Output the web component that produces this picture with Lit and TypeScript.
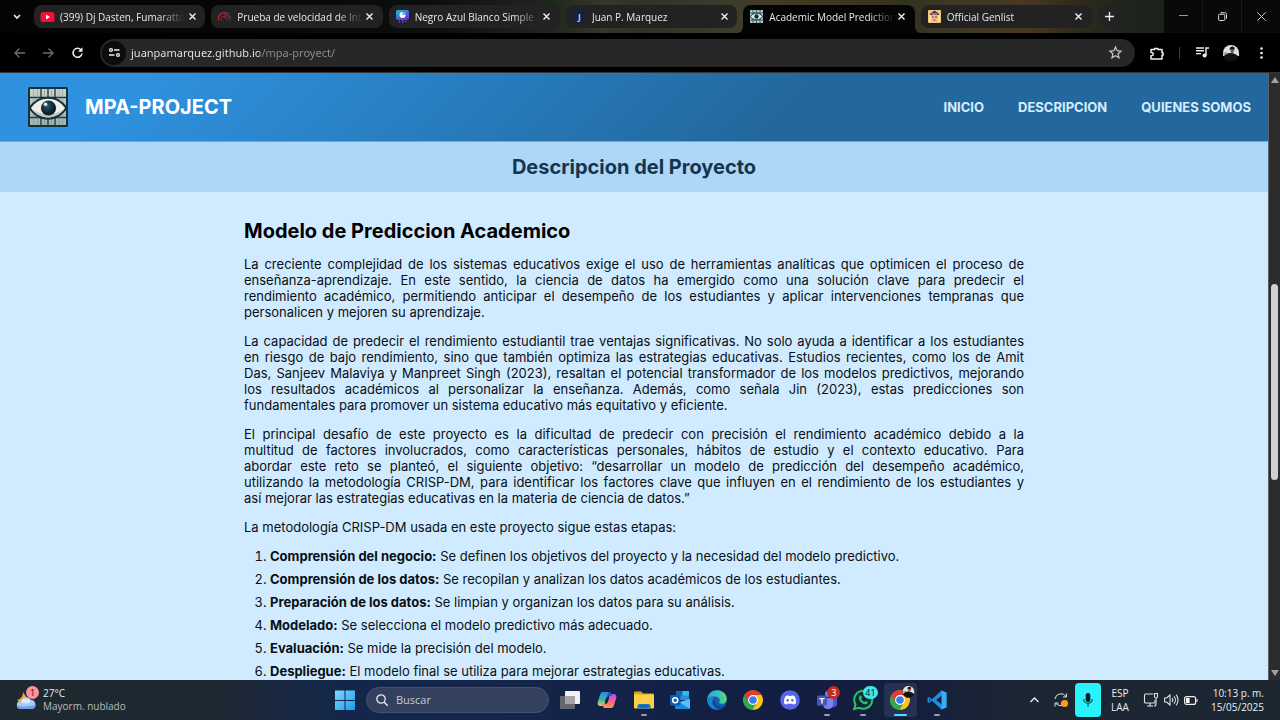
import { LitElement, html, svg, css, TemplateResult } from "lit";
import { customElement } from "lit/decorators.js";
import { classMap } from "lit/directives/class-map.js";

const avatar = svg`
  <circle cx="9" cy="9" r="8.5" fill="#0b0b0b"/>
  <path d="M1 9a8 8 0 0 1 16 0v3H1z" fill="#dfe3e2"/>
  <path d="M0.8 9l4-1 2 2-5 1z" fill="#9aa19c"/>
  <path d="M8.3 3.6h3.6l.4 2-.6 2.6-1.4 1.2-1.6-1z" fill="#8b5b49"/>
  <path d="M7.6 5c0-3 5-3.4 5.1-.4l-.6.8-3.6-.2-.5 1.4z" fill="#1a1413"/>
  <path d="M1.500 13c1.500-2.500 4-3.800 7-4 3 0 6 1.500 8 3.500a8.500 8.500 0 0 1-15 .5z" fill="#111"/>`;

const chromeLogo = svg`
  <circle cx="10" cy="10" r="9.800" fill="#fbc116"/>
  <path d="M1.510 5.100A9.800 9.800 0 0 0 10 19.800L14 12.300 10 10z" fill="#2da94f"/>
  <path d="M18.490 5.100H10v5l4 2.200L10 19.800A9.800 9.800 0 0 0 18.490 5.100z" fill="#fcc31e"/>
  <path d="M1.510 5.100A9.800 9.800 0 0 1 18.490 5.100H10L5.800 12.400z" fill="#e33b2e"/>
  <circle cx="10" cy="10" r="4.900" fill="#fff"/>
  <circle cx="10" cy="10" r="3.800" fill="#3b7ded"/>`;

const eyeLogo = svg`
  <defs>
    <linearGradient id="tile" x1="0" y1="0" x2="0" y2="1"><stop offset="0" stop-color="#cdd2c9"/><stop offset="1" stop-color="#9fb3af"/></linearGradient>
    <radialGradient id="iris" cx=".4" cy=".35"><stop offset="0" stop-color="#3a5a65"/><stop offset=".5" stop-color="#1b3d49"/><stop offset="1" stop-color="#0a222c"/></radialGradient>
  </defs>
  <rect width="40" height="40" rx="1.500" fill="#12323c"/>
  <rect x="2" y="2" width="36" height="36" fill="url(#tile)"/>
  <path d="M13 2v36M20 2v36M27 2v36M2 10.500h36M2 30.500h36" stroke="#17353d" stroke-width="1.300"/>
  <path d="M5.500 2v36M9.500 2v36M16.500 2v36M23.500 2v36M31 2v36M34.500 2v36" stroke="#7b918d" stroke-width=".5"/>
  <path d="M.5 21C10 6 30 6 39.500 21 30 36.500 10 36.500 .5 21z" fill="#12323c"/>
  <path d="M3 21C11 8.500 29 8.500 37 21 29 33.500 11 33.500 3 21z" fill="#f1efe6"/>
  <path d="M3 21C11 33.500 29 33.500 37 21 29 29 11 29 3 21z" fill="#b9c8c4"/>
  <circle cx="20.500" cy="21" r="7.600" fill="url(#iris)"/>
  <circle cx="17.500" cy="17.300" r="1.800" fill="#e9f0ee"/>`;

interface Tab { title: string; icon: TemplateResult; active?: boolean; }

const tabs: Tab[] = [
  { title: "(399) Dj Dasten, Fumaratto", icon: svg`<rect x="-.5" y="2" width="14" height="10" rx="2.500" fill="#f40f37"/><path d="M5 4.500v5L9 7z" fill="#fff"/>` },
  { title: "Prueba de velocidad de Int", icon: svg`<g fill="none" stroke="#b8202c"><path d="M.7 10.500A6 6 0 0 1 10.500 4.300" stroke-width="1.300"/><path d="M3 10.500A4 4 0 0 1 8 6" stroke-width="1"/><path d="M6 3.300l6.800 6.900M8 3l5 5M5.500 6l4.500 4.500" stroke-width="1"/></g>` },
  { title: "Negro Azul Blanco Simple", icon: svg`<defs><linearGradient id="cv" x1="0" y1="0" x2=".6" y2="1"><stop stop-color="#20bfd6"/><stop offset="1" stop-color="#6a2fe0"/></linearGradient></defs><rect width="13" height="10" rx="2" fill="url(#cv)"/><path d="M3.500 9.500l-1 3.500 2-1zM6 10h1.500v3H6zM9.500 9.500l1.500 3.500-2-1z" fill="#6a35e6"/><circle cx="6.500" cy="5" r="3" fill="#fff"/><path d="M6.500 5V2a3 3 0 0 1 3 3z" fill="#4fb4ea"/>` },
  { title: "Juan P. Marquez", icon: svg`<rect width="13" height="13" rx="1" fill="#17213a"/><text x="6.500" y="10" text-anchor="middle" font-family="Noto Sans" font-size="9" font-weight="600" fill="#cfdcec">J</text>` },
  { title: "Academic Model Prediction", active: true, icon: svg`<rect width="13" height="13" fill="#a9c6c4"/><path d="M0 3h13M0 10h13M3 0v13M6.500 0v13M10 0v13" stroke="#2d4c55" stroke-width=".8"/><path d="M.5 6.500C3 2 10 2 12.500 6.500 10 11 3 11 .5 6.500z" fill="#e6eeea" stroke="#12323c"/><circle cx="6.500" cy="6.500" r="2.200" fill="#12323c"/>` },
  { title: "Official Genlist", icon: svg`<rect width="13" height="13" rx="1" fill="#f0c470"/><path d="M2 4L6.500.5 11 4v3H2z" fill="#2c3c73"/><path d="M1 5h2v7H1zM10 5h2v7h-2z" fill="#fbe58b"/><ellipse cx="6.500" cy="7.500" rx="3.600" ry="4.500" fill="#f2b9a0"/><path d="M3 5l3.500-2L10 5 6.500 4.500z" fill="#b8352e"/><path d="M4.300 7h1.500M7.300 7h1.500" stroke="#23233d"/><path d="M5.500 10h2" stroke="#b02a2a"/>` },
];

const steps: [string, string][] = [
  ["Comprensión del negocio:", "Se definen los objetivos del proyecto y la necesidad del modelo predictivo."],
  ["Comprensión de los datos:", "Se recopilan y analizan los datos académicos de los estudiantes."],
  ["Preparación de los datos:", "Se limpian y organizan los datos para su análisis."],
  ["Modelado:", "Se selecciona el modelo predictivo más adecuado."],
  ["Evaluación:", "Se mide la precisión del modelo."],
  ["Despliegue:", "El modelo final se utiliza para mejorar estrategias educativas."],
];

interface App { name: string; icon: TemplateResult; open?: boolean; active?: boolean; badge?: string; tone?: string; }

const apps: App[] = [
  { name: "Vista de tareas", icon: svg`<rect x="0" y="6" width="15" height="13" rx="1" fill="#65686b"/><rect x="5" y="1" width="15" height="13" rx="1" fill="#f2f2f2"/><path d="M5 6h10v8H5z" fill="#a3a4a5"/>` },
  { name: "Copilot", icon: svg`<defs><linearGradient id="cpa" x1="0" y1="0" x2="0" y2="1"><stop stop-color="#2a8be8"/><stop offset=".55" stop-color="#35b8a2"/><stop offset="1" stop-color="#efd13a"/></linearGradient><linearGradient id="cpb" x1="0" y1="0" x2="0" y2="1"><stop stop-color="#a65be0"/><stop offset=".5" stop-color="#f0609a"/><stop offset="1" stop-color="#fb9a48"/></linearGradient></defs><path d="M6 2h6c2 0 2 1.500 3 4h-3c-2 0-2.500 1-3 3l-1 4c-.5 2-1 3-3 3H4c-3 0-4-2-3-5l2-6c.6-2 1.300-3 3-3z" fill="url(#cpa)"/><path d="M14 18H8c-2 0-2-1.500-3-4h3c2 0 2.500-1 3-3l1-4c.5-2 1-3 3-3h1c3 0 4 2 3 5l-2 6c-.6 2-1.300 3-3 3z" fill="url(#cpb)"/><path d="M11 2h1c2 0 2 1.500 3 4h-3c-1 0-1.500.3-2 1z" fill="#1d55c9"/><path d="M9 8h3l-1.500 4.500H7.500z" fill="#14274a"/>` },
  { name: "Explorador de archivos", open: true, icon: svg`<path d="M0 3c0-1 .5-1.500 1.500-1.500H7l2 2h9.500c1 0 1.500.5 1.500 1.500v5H0z" fill="#e2a31c"/><rect y="4.500" width="20" height="14" rx="1.300" fill="#fbd047"/><path d="M3.500 18.500V16c0-1.300.8-2 2-2h9c1.200 0 2 .7 2 2v2.500z" fill="#1679c5"/><path d="M6 15.500h8v1H6z" fill="#0c5797"/>` },
  { name: "Outlook", icon: svg`<path d="M6 1h13v9H6z" fill="#2b8fd8"/><path d="M6 1h6.500v4.500H6z" fill="#1066b5"/><path d="M12.500 1H19v4.500h-6.500z" fill="#35b8f1"/><path d="M5 9l7.500 4.500L20 9v9c0 .6-.4 1-1 1H6c-.6 0-1-.4-1-1z" fill="#1a8ad8"/><path d="M20 9v10L9 12z" fill="#4fc3f5"/><rect y="5" width="10.500" height="10.500" rx="1" fill="#0c5eb0"/><circle cx="5.200" cy="10.200" r="2.500" fill="none" stroke="#fff" stroke-width="1.500"/>` },
  { name: "Edge", icon: svg`<defs><linearGradient id="eg" x1="0" y1=".4" x2="1" y2=".3"><stop stop-color="#26a8e2"/><stop offset=".6" stop-color="#36c5b5"/><stop offset="1" stop-color="#6bdc5c"/></linearGradient></defs><circle cx="10" cy="10" r="9.800" fill="#1261ad"/><path d="M.3 9C1 3.500 5 .2 10 .2c5.700 0 9.800 4 9.800 8.500 0 3-2.300 5-5 5-2 0-3-.7-2.500-1.700C14 9 11 6.500 8 6.500 4 6.500 1 8 .3 11z" fill="url(#eg)"/><path d="M.3 9C2 6.500 5 5.700 7.500 6.500 4.500 8.500 4 14.500 8 17.500c2 1.500 4 2 5 1.900C6 21-.3 16 .3 9z" fill="#1d83d4"/><path d="M8.500 8.500C6.500 11 8.500 16 13 16.500c2.500.2 4.500-.8 5.500-1.500-.8 2-3 4-5.500 4.400-4-.3-7.500-4-7-7.900.3-1.600 1.300-2.700 2.500-3z" fill="#114a8b"/>` },
  { name: "Google Chrome", icon: chromeLogo },
  { name: "Discord", icon: svg`<circle cx="10" cy="10" r="9.800" fill="#5865ea"/><path d="M5.500 6.200C7 5.300 8 5.200 8.300 5.200l.4.800h2.600l.4-.8c.3 0 1.300.1 2.800 1 1.200 2 1.700 4.500 1.500 7-1 .8-2 1.300-3 1.400l-.7-1.200c-1.500.4-3.100.4-4.600 0L7 14.600c-1-.1-2-.6-3-1.400-.2-2.500.3-5 1.500-7z" fill="#fff"/><ellipse cx="7.700" cy="10.300" rx="1.200" ry="1.400" fill="#5865ea"/><ellipse cx="12.300" cy="10.300" rx="1.200" ry="1.400" fill="#5865ea"/>` },
  { name: "Teams", open: true, badge: "3", tone: "red", icon: svg`<circle cx="17" cy="6" r="2" fill="#5e67c9"/><circle cx="11" cy="4" r="3" fill="#7b83eb"/><path d="M14 8h6v6a3.500 3.500 0 0 1-5 3z" fill="#5059c9"/><path d="M6 8h10v6c0 3-2 5-5 5s-5-2-5-5z" fill="#7b83eb"/><rect y="5.500" width="10" height="10" rx="1" fill="#4b53bc"/><path d="M2.500 8h5v1.300H5.700V13.500H4.300V9.300H2.500z" fill="#fff"/>` },
  { name: "WhatsApp", open: true, badge: "41", tone: "cyan", icon: svg`<path d="M1.200 19l1.300-4.600A9 9 0 1 1 6 17.700z" fill="#102a38" stroke="#27c463" stroke-width="2"/><path d="M6.500 6c.8-1 1.500-.8 1.800-.1l.7 1.600c.1.500-.8 1.300-.8 1.500.7 1.400 1.900 2.300 3.200 2.900.4.100 1-1 1.400-1l1.800.9c.6.400 0 1.700-.8 2.200-1.500.9-4 .1-6-2C5.700 10 5.500 7.500 6.500 6z" fill="#27c463"/>` },
  { name: "Chrome: juanpamarquez", open: true, active: true, icon: chromeLogo },
  { name: "Visual Studio Code", open: true, icon: svg`<path d="M14.500.5L5 9.300 2 7 .5 7.800v4.400L2 13l3-2.300 9.500 8.800 5-2.300V2.800z" fill="#1f8fdc"/><path d="M14.500.5l5 2.300v14.400l-5 2.300z" fill="#39adf2"/><path d="M14.500 5.800L9 10l5.500 4.200zM2 8.500L3.500 10 2 11.500z" fill="#10234a"/>` },
];

@customElement("browser-chrome")
class BrowserChrome extends LitElement {
  static styles = css`
    :host { display: block; background: #000; font: 10px/16px "Open Sans", "Noto Sans", sans-serif; color: #e8e8e8; }
    button { font: inherit; color: inherit; background: none; border: 0; padding: 0; display: flex; align-items: center; justify-content: center; flex: none; }
    svg { display: block; overflow: visible; flex: none; }
    .strip { display: flex; height: 33px; background: linear-gradient(90deg, #040404, #070707 20%, #0b0f0c 34%, #20271f 43%, #34372a 47%, #2f3227 50%, #3d3c2b 57%, #40391f 63%, #33311f 71%, #3c3826 74%, #493822 80%, #302b1b 84%, #20261f 87%, #1c211b 91%); }
    .search { width: 34px; }
    .tabs { display: flex; flex: 0 1 1058px; gap: 6px; padding-top: 5px; min-width: 0; }
    .tab { position: relative; flex: 1 1 0; min-width: 0; display: flex; align-items: center; gap: 6px; height: 23px; padding: 0 6px 0 7px; box-sizing: border-box; border-radius: 8px; background: #222222; }
    .tab.active { background: #030403; height: 28px; padding-bottom: 5px; border-radius: 8px 8px 0 0; }
    .tab.active::before, .tab.active::after { content: ""; position: absolute; bottom: 0; width: 6px; height: 6px; }
    .tab.active::before { right: 100%; background: radial-gradient(circle at 0 0, transparent 6px, #030403 6px); }
    .tab.active::after { left: 100%; background: radial-gradient(circle at 100% 0, transparent 6px, #030403 6px); }
    .title { flex: 1; min-width: 0; overflow: hidden; white-space: nowrap; margin-right: -6px; padding-right: 1px; -webkit-mask-image: linear-gradient(90deg, #000 calc(100% - 26px), transparent); mask-image: linear-gradient(90deg, #000 calc(100% - 26px), transparent); }
    .close { width: 14px; height: 14px; }
    .plus { width: 22px; height: 22px; margin: 5px 0 0 6px; border-radius: 50%; background: #222; }
    .fill { flex: 1; }
    .controls { display: flex; gap: 1px; background: #171817; }
    .control { width: 38px; background: #090909; }
    .bar { display: flex; align-items: center; height: 40px; box-sizing: border-box; padding: 0 9px; border-bottom: 1px solid #353535; }
    .nav { width: 20px; height: 20px; margin-right: 9px; color: #6d6d6d; }
    .nav.on { color: #ededed; margin-right: 13px; }
    .omni { flex: 1; min-width: 0; display: flex; align-items: center; height: 28px; border-radius: 14px; background: #272727; padding: 0 13px 0 2px; }
    .site { width: 24px; height: 24px; border-radius: 50%; background: #0c0c0c; }
    .address { flex: 1; display: grid; min-width: 0; }
    .tools { display: flex; align-items: center; }
    .tool { width: 20px; height: 20px; }
    .puzzle { margin-left: 12px; }
    .sep { width: 1px; height: 12px; margin: 0 12px; background: #3c3c3c; }
    .person { margin: 0 11px 0 10px; }
  `;

  render() {
    return html`
      <div class="strip">
        <button class="search" aria-label="Buscar pestañas"><svg width="8" height="6" viewBox="0 0 8 6"><path d="M1 1l3 3 3-3" fill="none" stroke="#eee" stroke-width="1.600"/></svg></button>
        <div class="tabs">
          ${tabs.map((t) => html`
            <div class=${classMap({ tab: true, active: !!t.active })}>
              <svg width="13" height="13" viewBox="0 0 13 13">${t.icon}</svg>
              <span class="title">${t.title}</span>
              <button class="close" aria-label="Cerrar pestaña"><svg width="7" height="7" viewBox="0 0 7 7"><path d="M.5.5l6 6M6.500.5l-6 6" stroke="#f2f2f2" stroke-width="1.400"/></svg></button>
            </div>`)}
        </div>
        <button class="plus" aria-label="Nueva pestaña"><svg width="9" height="9" viewBox="0 0 9 9"><path d="M4.500 0v9M0 4.500h9" stroke="#f2f2f2" stroke-width="1.300"/></svg></button>
        <div class="fill"></div>
        <div class="controls">
          <button class="control" aria-label="Minimizar"><svg width="9" height="9" viewBox="0 0 9 9"><path d="M0 3.500h9" stroke="#999"/></svg></button>
          <button class="control" aria-label="Restaurar"><svg width="9" height="9" viewBox="0 0 9 9"><rect x=".6" y="2.300" width="6.200" height="6.200" rx="1" fill="none" stroke="#ddd"/><path d="M2.500.7h4.300c1.200 0 1.700.5 1.700 1.700v4.300" fill="none" stroke="#ddd"/></svg></button>
          <button class="control" aria-label="Cerrar"><svg width="9" height="9" viewBox="0 0 9 9"><path d="M.3.3l8.400 8.400M8.700.3L.3 8.700" stroke="#ccc"/></svg></button>
        </div>
      </div>
      <div class="bar">
        <button class="nav" aria-label="Atrás"><svg width="11" height="10" viewBox="0 0 11 10"><path d="M11 5H1M5.500.5L1 5l4.500 4.500" fill="none" stroke="currentColor" stroke-width="1.300"/></svg></button>
        <button class="nav" aria-label="Adelante"><svg width="11" height="10" viewBox="0 0 11 10"><path d="M0 5h10M5.500.5L10 5 5.500 9.500" fill="none" stroke="currentColor" stroke-width="1.300"/></svg></button>
        <button class="nav on" aria-label="Recargar"><svg width="11" height="11" viewBox="0 0 11 11"><path d="M9.300 3.300A4.500 4.500 0 1 0 10 6.500" fill="none" stroke="currentColor" stroke-width="1.500"/><path d="M10.500.3v4.500H6z" fill="currentColor"/></svg></button>
        <div class="omni">
          <button class="site" aria-label="Información del sitio"><svg width="11" height="9" viewBox="0 0 11 9"><g fill="none" stroke="#f0f0f0" stroke-width="1.300"><circle cx="2" cy="2" r="1.400"/><path d="M5 2h5.500M0 7h5.500"/><circle cx="9" cy="7" r="1.400"/></g></svg></button>
          <address-field class="address"></address-field>
          <button aria-label="Agregar a favoritos"><svg width="13" height="13" viewBox="0 0 13 13"><path d="M6.500 1l1.600 3.700 4 .4-3 2.700.9 4-3.500-2.100L3 11.800l.9-4-3-2.700 4-.4z" fill="none" stroke="#c9c9c9" stroke-width="1.200"/></svg></button>
        </div>
        <div class="tools">
          <button class="tool puzzle" aria-label="Extensiones"><svg width="14" height="14" viewBox="0 0 14 14"><path d="M1 3.500h3.700V2.500h3.200v1H12v3.200h1v2.600h-1V13H1V9.700h.7a1.600 1.600 0 0 0 0-3.200H1z" fill="none" stroke="#f0f0f0" stroke-width="1.500" stroke-linejoin="round"/></svg></button>
          <span class="sep"></span>
          <button class="tool" aria-label="Control multimedia"><svg width="13" height="11" viewBox="0 0 13 11"><path d="M0 1h8M0 3.800h8M0 6.600h5" stroke="#eee" stroke-width="1.400"/><path d="M10 8.500V1h3" fill="none" stroke="#eee" stroke-width="1.400"/><circle cx="8.600" cy="8.600" r="2" fill="#eee"/></svg></button>
          <button class="person" aria-label="Perfil"><svg width="18" height="18" viewBox="0 0 18 18">${avatar}</svg></button>
          <button class="tool" aria-label="Menú"><svg width="3" height="12" viewBox="0 0 3 12" fill="#eee"><circle cx="1.500" cy="1.500" r="1.300"/><circle cx="1.500" cy="6" r="1.300"/><circle cx="1.500" cy="10.500" r="1.300"/></svg></button>
        </div>
      </div>`;
  }
}

@customElement("address-field")
class AddressField extends LitElement {
  static styles = css`
    .url { width: 100%; box-sizing: border-box; border: 0; outline: 0; padding: 0 0 0 5px; font: 11px/18px "Noto Sans", "Open Sans", sans-serif; background: linear-gradient(90deg, #ececec 134px, #8f8f8f 134px); -webkit-background-clip: text; background-clip: text; -webkit-text-fill-color: transparent; color: #c4c4c4; }
  `;
  render() {
    return html`<input class="url" type="text" aria-label="Dirección" value="juanpamarquez.github.io/mpa-proyect/">`;
  }
}

@customElement("project-page")
class ProjectPage extends LitElement {
  static styles = css`
    :host { display: flex; flex: 1; min-height: 0; background: #d0ebff; font: 13px/16px Inter, sans-serif; color: #0a0f14; }
    .page { flex: 1; min-width: 0; overflow: hidden; }
    .header { display: flex; align-items: center; gap: 17px; height: 69px; box-sizing: border-box; padding: 0 17px 0 28px; background: linear-gradient(135deg, #2f92e0 10%, #22689e 61%); border-bottom: 1px solid #6fa8d6; }
    .brand { flex: 1; margin: 0; font-size: 20px; line-height: 24px; font-weight: 700; color: #fff; }
    .links { display: flex; gap: 34px; }
    .links a { color: #d4edff; font-weight: 700; text-decoration: none; }
    .banner { margin: 0; padding: 13px 0; background: #aed6f7; color: #14344d; text-align: center; font-size: 20px; line-height: 24px; font-weight: 700; }
    .content { max-width: 780px; margin: 0 auto; padding-top: 27px; text-align: justify; }
    h2 { margin: 0 0 13px; font-size: 20px; line-height: 24px; font-weight: 700; color: #000; }
    p { margin: 0 0 13px; }
    ol { margin: 0; padding-left: 26px; text-align: left; }
    li { margin-bottom: 7px; }
    .rail { width: 12px; box-sizing: border-box; display: flex; flex-direction: column; align-items: center; background: #2c2c2c; border-left: 1px solid #56606a; }
    .rail svg { display: block; margin: 4px 0; }
    .track { flex: 1; display: grid; grid-template-rows: 200fr 198fr 189fr; }
    .thumb { grid-row: 2; width: 7px; border-radius: 4px; background: #d0d0d0; }
  `;

  render() {
    return html`
      <div class="page">
        <header class="header">
          <svg width="40" height="40" viewBox="0 0 40 40" role="img" aria-label="Logo">${eyeLogo}</svg>
          <h1 class="brand">MPA-PROJECT</h1>
          <nav class="links"><a href="#inicio">INICIO</a><a href="#descripcion">DESCRIPCION</a><a href="#quienes">QUIENES SOMOS</a></nav>
        </header>
        <h2 class="banner">Descripcion del Proyecto</h2>
        <main class="content">
          <h2>Modelo de Prediccion Academico</h2>
          <p>La creciente complejidad de los sistemas educativos exige el uso de herramientas analíticas que optimicen el proceso de enseñanza-aprendizaje. En este sentido, la ciencia de datos ha emergido como una solución clave para predecir el rendimiento académico, permitiendo anticipar el desempeño de los estudiantes y aplicar intervenciones tempranas que personalicen y mejoren su aprendizaje.</p>
          <p>La capacidad de predecir el rendimiento estudiantil trae ventajas significativas. No solo ayuda a identificar a los estudiantes en&nbsp;riesgo de bajo rendimiento, sino que también optimiza las estrategias educativas. Estudios recientes, como los de Amit Das,&nbsp;Sanjeev Malaviya y Manpreet Singh (2023), resaltan el potencial transformador de los modelos predictivos, mejorando los&nbsp;resultados académicos al personalizar la enseñanza. Además, como señala Jin (2023), estas predicciones son fundamentales para promover un sistema educativo más equitativo y eficiente.</p>
          <p>El principal desafío de este proyecto es la dificultad de predecir con precisión el rendimiento académico debido a la multitud&nbsp;de factores involucrados, como características personales, hábitos de estudio y el contexto educativo. Para abordar&nbsp;este reto se planteó, el siguiente objetivo: “desarrollar un modelo de predicción del desempeño académico, utilizando&nbsp;la metodología CRISP-DM, para identificar los factores clave que influyen en el rendimiento de los estudiantes y así&nbsp;mejorar las estrategias educativas en la materia de ciencia de datos.”</p>
          <p>La metodología CRISP-DM usada en este proyecto sigue estas etapas:</p>
          <ol>${steps.map(([name, text]) => html`<li><strong>${name}</strong> ${text}</li>`)}</ol>
        </main>
      </div>
      <div class="rail">
        <svg width="8" height="6" viewBox="0 0 8 6"><path d="M4 0l4 6H0z" fill="#a0a0a0"/></svg>
        <div class="track"><div class="thumb"></div></div>
        <svg width="8" height="6" viewBox="0 0 8 6"><path d="M4 6l4-6H0z" fill="#a0a0a0"/></svg>
      </div>`;
  }
}

@customElement("task-bar")
class TaskBar extends LitElement {
  static styles = css`
    :host { display: flex; height: 40px; padding: 0 16px; box-sizing: border-box; font: 10px/14px "Open Sans", "Noto Sans", sans-serif; color: #e9edf2; background: linear-gradient(90deg, #1f2932, #1e2831 17%, #14274a 26%, #142549 40%, #121e42 60%, #151f3c 72%, #1b2632 80%, #1c2732); }
    button { font: inherit; color: inherit; background: none; border: 0; padding: 0; display: flex; align-items: center; justify-content: center; flex: none; }
    svg { display: block; overflow: visible; flex: none; }
    .side { flex: 1 1 0; display: flex; align-items: center; white-space: nowrap; }
    .weather { position: relative; gap: 6px; text-align: left; }
    .weather small { display: block; font-size: 10px; line-height: 13px; color: #b5bcc3; }
    .weather span { line-height: 13px; }
    .badge { position: absolute; min-width: 13px; height: 13px; border-radius: 7px; font: 9px/13px "Noto Sans", sans-serif; text-align: center; }
    .pink { left: 10px; top: -1px; background: #fa95a0; color: #3a1015; }
    .red { left: 17px; top: 3px; background: #c42b1f; color: #fff; }
    .cyan { left: 16px; top: 3px; padding: 0 1px; background: #3ee6f0; color: #06262b; }
    .middle { display: flex; align-items: center; padding-left: 3px; }
    .start { width: 33px; height: 36px; }
    .find { display: flex; align-items: center; gap: 8px; width: 183px; height: 26px; box-sizing: border-box; margin: 0 3px 0 5px; padding: 0 9px; border: 1px solid #44516f; border-radius: 13px; background: #33415f; }
    .find input { flex: 1; min-width: 0; border: 0; outline: 0; padding: 0; background: none; color: #fff; font: 11px/16px "Open Sans", "Noto Sans", sans-serif; }
    .find input::placeholder { color: #c4cad6; opacity: 1; }
    .apps { display: grid; grid-template-columns: repeat(11, 1fr); width: 403px; justify-items: center; }
    .app { position: relative; width: 33px; height: 34px; border-radius: 4px; }
    .app.active { background: #263254; }
    .app.open::after { content: ""; position: absolute; bottom: 1px; width: 6px; height: 2px; border-radius: 1px; background: #9a9eae; }
    .app.active::after { width: 13px; background: #4be0f0; }
    .face { position: absolute; right: 2px; top: 2px; }
    .tray { justify-content: flex-end; }
    .mic { width: 26px; height: 34px; border-radius: 4px; background: #2af3fb; margin: 0 10px 0 4px; }
    .small { width: 20px; height: 30px; }
    .up { width: 20px; height: 30px; margin-right: 7px; }
    .lang { margin-right: 12px; }
    .clock { text-align: right; margin-left: 10px; }
  `;

  render() {
    return html`
      <div class="side">
        <button class="weather">
          <svg width="21" height="21" viewBox="0 0 21 21"><path d="M7 2c0 4-2 7-6 8 3 3 8 2 10-2z" fill="#f6a526"/><path d="M5 19a4 4 0 0 1-.3-8 5.500 5.500 0 0 1 10-1.200A4.700 4.700 0 0 1 16 19z" fill="#a9c8f5"/><path d="M5 19a4 4 0 0 1-3.900-3.500c4 1.500 13 1.500 18.800-1A4.700 4.700 0 0 1 16 19z" fill="#6f9fe4"/><ellipse cx="10" cy="11" rx="4.500" ry="2.500" fill="#dbe9fd"/></svg>
          <div class="badge pink">1</div>
          <span>27°C<small>Mayorm. nublado</small></span>
        </button>
      </div>
      <div class="middle">
        <button class="start" aria-label="Inicio"><svg width="20" height="20" viewBox="0 0 20 20"><defs><linearGradient id="w" x1="0" y1="0" x2="1" y2="1"><stop stop-color="#7fd8fb"/><stop offset="1" stop-color="#1b9bf0"/></linearGradient></defs><path d="M0 .5h9.500V10H0zM10.500.5H20V10h-9.500zM0 11h9.500v9H0zM10.500 11H20v9h-9.500z" fill="url(#w)"/></svg></button>
        <label class="find">
          <svg width="12" height="12" viewBox="0 0 12 12"><circle cx="5" cy="5" r="4.200" fill="none" stroke="#e6e9ef" stroke-width="1.300"/><path d="M8 8l3.700 3.700" stroke="#e6e9ef" stroke-width="1.500"/></svg>
          <input type="text" placeholder="Buscar" aria-label="Buscar">
        </label>
        <div class="apps">
          ${apps.map((a) => html`
            <button class=${classMap({ app: true, open: !!a.open, active: !!a.active })} aria-label=${a.name}>
              <svg width="20" height="20" viewBox="0 0 20 20">${a.icon}</svg>
              ${a.badge ? html`<span class="badge ${a.tone}">${a.badge}</span>` : ""}
              ${a.active ? html`<svg class="face" width="13" height="13" viewBox="0 0 18 18">${avatar}</svg>` : ""}
            </button>`)}
        </div>
      </div>
      <div class="side tray">
        <button class="up" aria-label="Iconos ocultos"><svg width="9" height="6" viewBox="0 0 9 6"><path d="M.5 5l4-4 4 4" fill="none" stroke="#eee" stroke-width="1.300"/></svg></button>
        <button class="small" aria-label="Actualización"><svg width="14" height="14" viewBox="0 0 14 14"><g fill="none" stroke="#dfe3e8"><path d="M1 6a6 6 0 0 1 11-2.500M12.500.5v3.500H9M12.500 7.500A6 6 0 0 1 2 10.500M1 13.500V10h3.500"/></g><circle cx="10.500" cy="10.500" r="3.600" fill="#f99b1c"/></svg></button>
        <button class="mic" aria-label="Micrófono"><svg width="10" height="14" viewBox="0 0 10 14"><rect x="2.700" y="0" width="4.600" height="9" rx="2.300" fill="#061b1e"/><path d="M.7 6a4.300 4.300 0 0 0 8.600 0M5 10.500V14" fill="none" stroke="#0a5c61" stroke-width="1.200"/></svg></button>
        <button class="lang">ESP<br>LAA</button>
        <button class="small" aria-label="Red"><svg width="14" height="14" viewBox="0 0 14 14"><g fill="none" stroke="#dfe3e8" stroke-width="1.100"><path d="M9 1H1.500c-.6 0-1 .4-1 1v7c0 .6.400 1 1 1H10c.6 0 1-.4 1-1V7M3 13h6M6 10v3"/><path d="M10.500.5h3v3a1.500 1.500 0 0 1-3 0zM12 5v6c0 1-.5 2-2 2"/></g></svg></button>
        <button class="small" aria-label="Volumen"><svg width="14" height="12" viewBox="0 0 14 12"><g fill="none" stroke="#dfe3e8" stroke-width="1.100"><path d="M.6 4v4h2L6 11V1L2.600 4zM8 4a3 3 0 0 1 0 4M10 2.300a5.500 5.500 0 0 1 0 7.400M12 .7a8 8 0 0 1 0 10.600"/></g></svg></button>
        <button class="small" aria-label="Batería"><svg width="14" height="9" viewBox="0 0 14 9"><rect x=".6" y=".6" width="11" height="7.800" rx="2" fill="none" stroke="#eee" stroke-width="1.200"/><path d="M2 2h3.500v5H2z" fill="#fff"/><path d="M12.500 3h1v3h-1z" fill="#eee"/></svg></button>
        <div class="clock">10:13 p. m.<br>15/05/2025</div>
      </div>`;
  }
}

@customElement("app-root")
class AppRoot extends LitElement {
  static styles = css`
    :host { display: flex; flex-direction: column; height: 100vh; overflow: hidden; }
  `;

  render() {
    return html`<browser-chrome></browser-chrome><project-page></project-page><task-bar></task-bar>`;
  }
}
